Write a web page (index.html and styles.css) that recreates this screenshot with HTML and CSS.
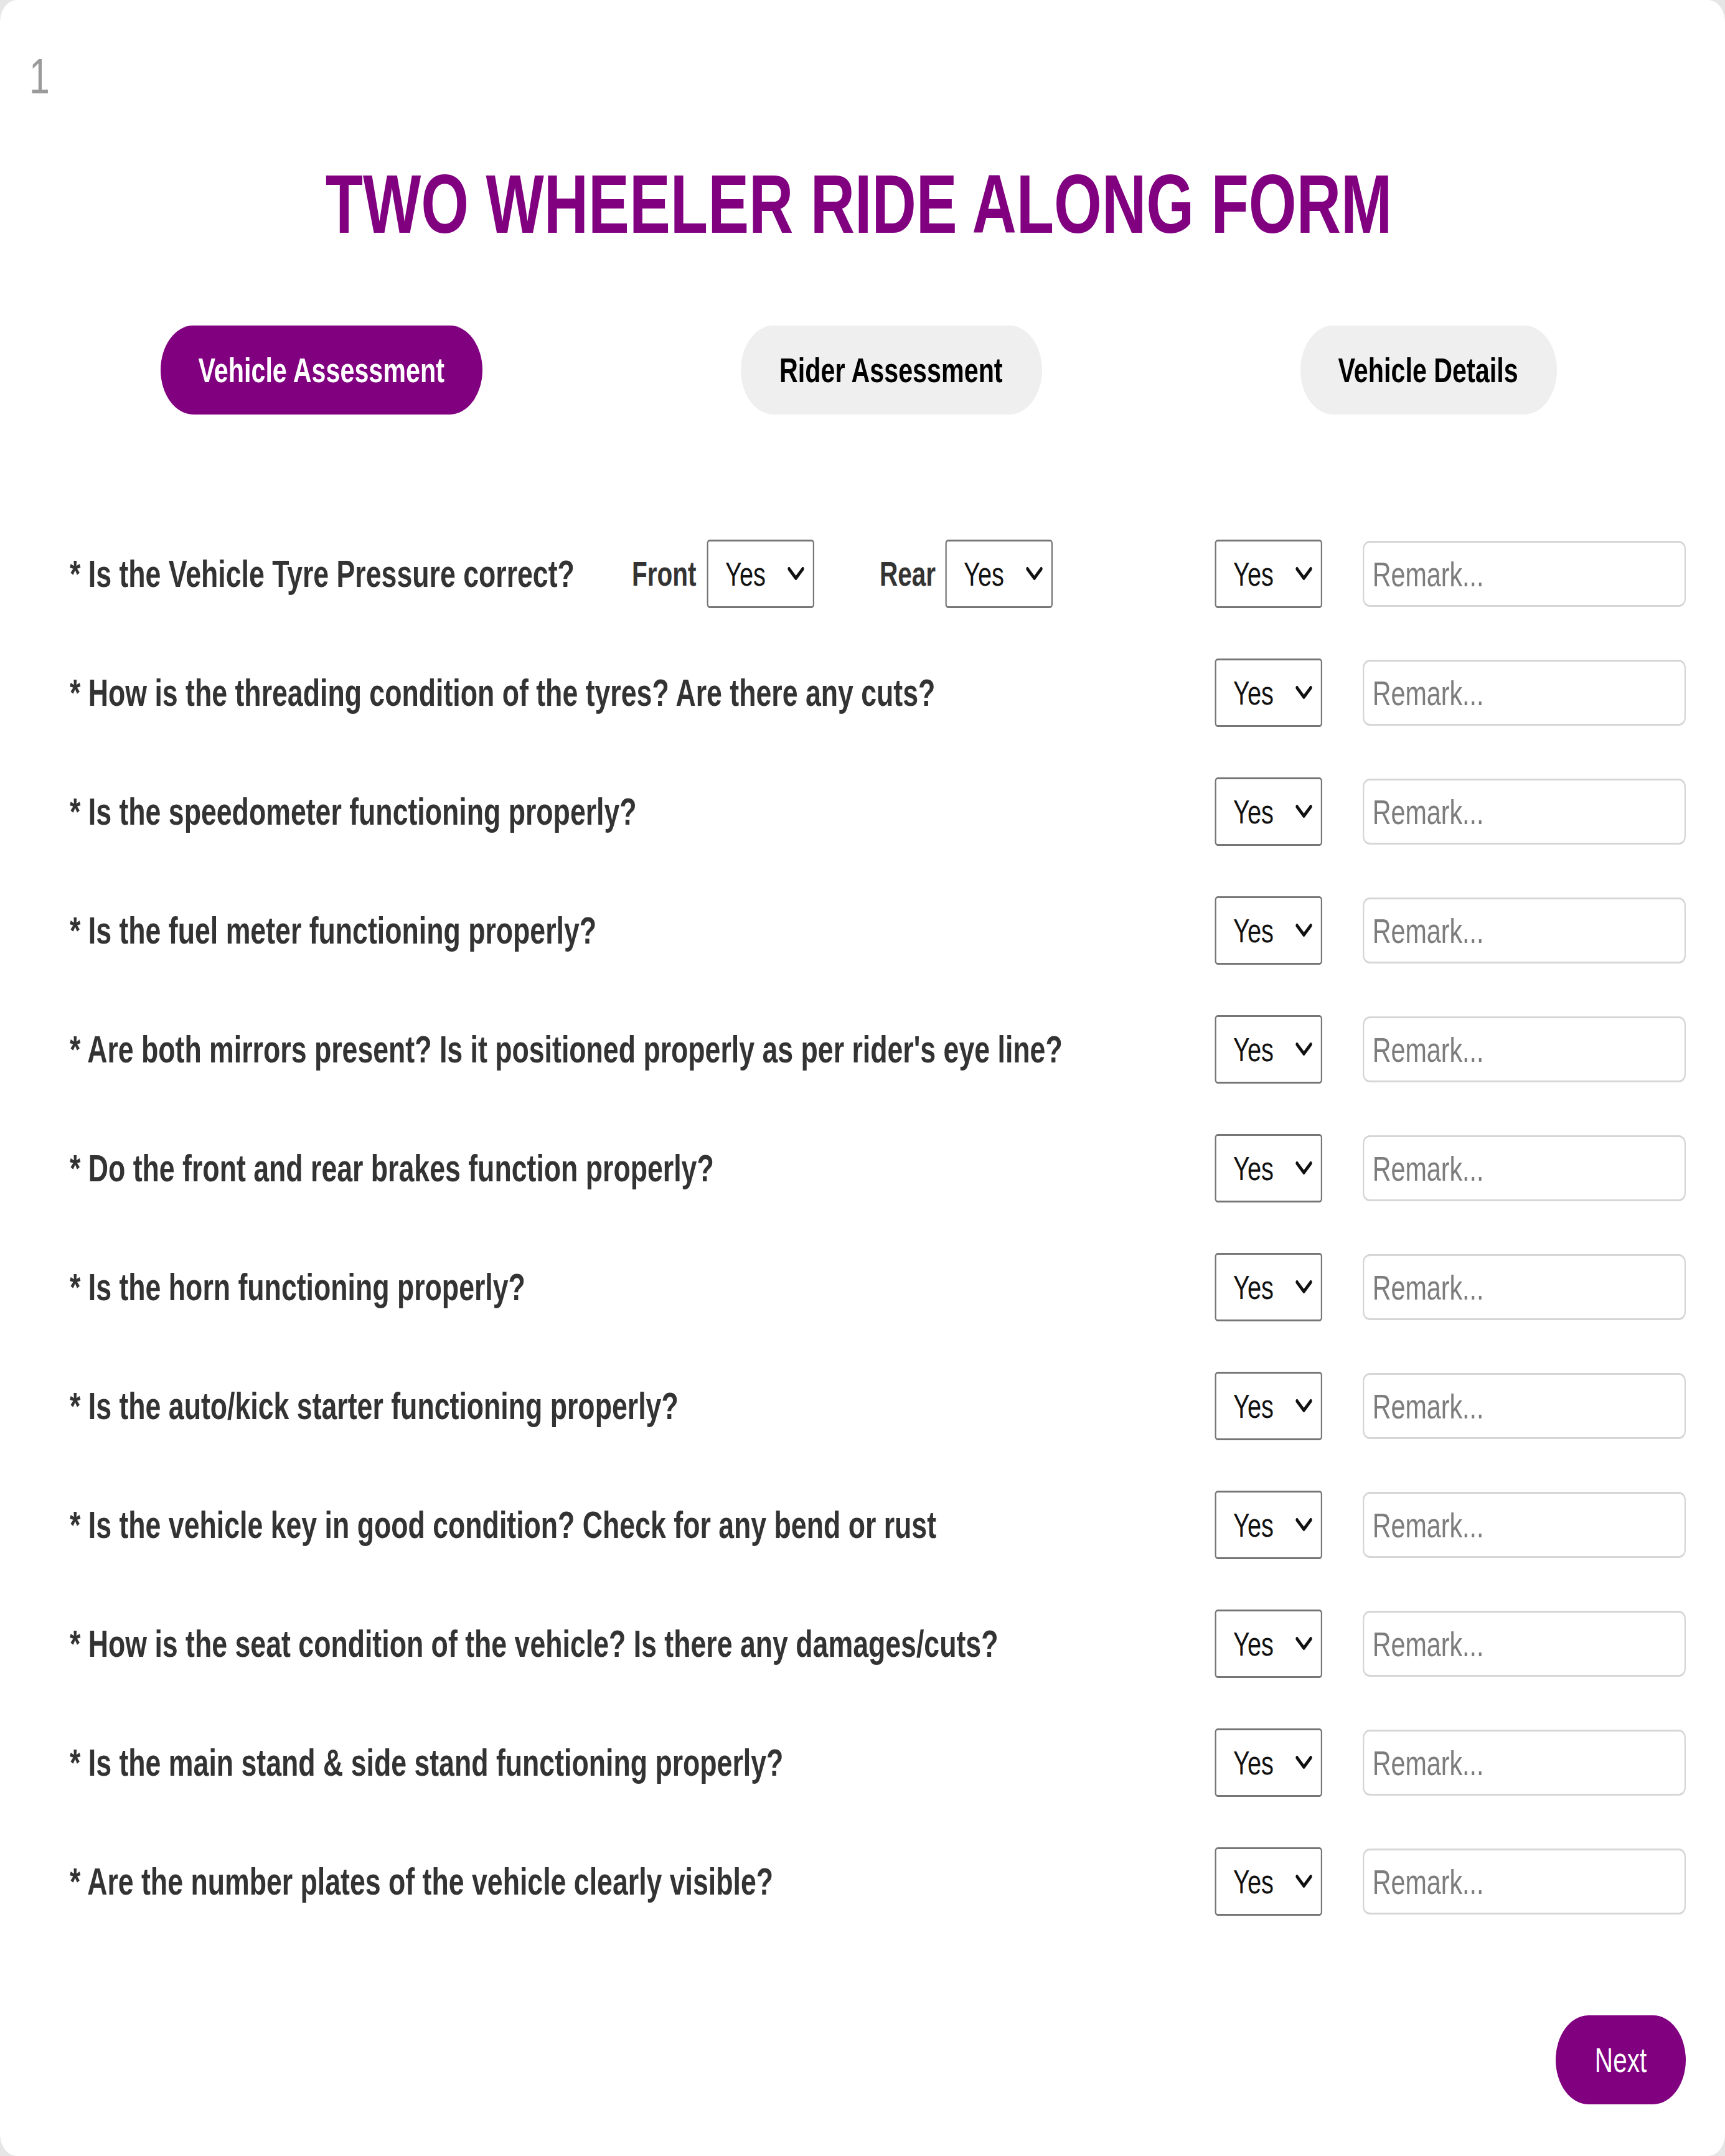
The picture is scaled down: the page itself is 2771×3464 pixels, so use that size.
FILE: index.html
```html
<!DOCTYPE html>
<html lang="en">
<head>
<meta charset="utf-8">
<title>Two Wheeler Ride Along Form</title>
<link rel="stylesheet" href="styles.css">
</head>
<body>
<div class="card">
  <div class="page-num"><span class="sq sq-l">1</span></div>
  <h1 class="title"><span class="sq sq-c">TWO WHEELER RIDE ALONG FORM</span></h1>
  <nav class="tabs">
    <button class="tab tab-1 active" type="button"><span class="sq sq-c">Vehicle Assessment</span></button>
    <button class="tab tab-2" type="button"><span class="sq sq-c">Rider Assessment</span></button>
    <button class="tab tab-3" type="button"><span class="sq sq-c">Vehicle Details</span></button>
  </nav>
  <form class="rows">
    <div class="row">
      <label class="q q-first"><span class="sq sq-l">* Is the Vehicle Tyre Pressure correct?</span></label>
      <div class="pairs">
        <div class="pair">
          <span class="sub-label front"><span class="sq sq-l">Front</span></span>
          <div class="sel ctl"><select><option>Yes</option><option>No</option></select><svg class="chev" viewBox="0 0 36 22"><polyline points="3,3 18,18 33,3"/></svg></div>
        </div>
        <div class="pair">
          <span class="sub-label rear"><span class="sq sq-l">Rear</span></span>
          <div class="sel ctl"><select><option>Yes</option><option>No</option></select><svg class="chev" viewBox="0 0 36 22"><polyline points="3,3 18,18 33,3"/></svg></div>
        </div>
      </div>
      <div class="answer">
        <div class="sel ctl"><select><option>Yes</option><option>No</option></select><svg class="chev" viewBox="0 0 36 22"><polyline points="3,3 18,18 33,3"/></svg></div>
        <input class="remark ctl" type="text" placeholder="Remark...">
      </div>
    </div>
    <div class="row">
      <label class="q"><span class="sq sq-l">* How is the threading condition of the tyres? Are there any cuts?</span></label>
      <div class="answer">
        <div class="sel ctl"><select><option>Yes</option><option>No</option></select><svg class="chev" viewBox="0 0 36 22"><polyline points="3,3 18,18 33,3"/></svg></div>
        <input class="remark ctl" type="text" placeholder="Remark...">
      </div>
    </div>
    <div class="row">
      <label class="q"><span class="sq sq-l">* Is the speedometer functioning properly?</span></label>
      <div class="answer">
        <div class="sel ctl"><select><option>Yes</option><option>No</option></select><svg class="chev" viewBox="0 0 36 22"><polyline points="3,3 18,18 33,3"/></svg></div>
        <input class="remark ctl" type="text" placeholder="Remark...">
      </div>
    </div>
    <div class="row">
      <label class="q"><span class="sq sq-l">* Is the fuel meter functioning properly?</span></label>
      <div class="answer">
        <div class="sel ctl"><select><option>Yes</option><option>No</option></select><svg class="chev" viewBox="0 0 36 22"><polyline points="3,3 18,18 33,3"/></svg></div>
        <input class="remark ctl" type="text" placeholder="Remark...">
      </div>
    </div>
    <div class="row">
      <label class="q"><span class="sq sq-l">* Are both mirrors present? Is it positioned properly as per rider's eye line?</span></label>
      <div class="answer">
        <div class="sel ctl"><select><option>Yes</option><option>No</option></select><svg class="chev" viewBox="0 0 36 22"><polyline points="3,3 18,18 33,3"/></svg></div>
        <input class="remark ctl" type="text" placeholder="Remark...">
      </div>
    </div>
    <div class="row">
      <label class="q"><span class="sq sq-l">* Do the front and rear brakes function properly?</span></label>
      <div class="answer">
        <div class="sel ctl"><select><option>Yes</option><option>No</option></select><svg class="chev" viewBox="0 0 36 22"><polyline points="3,3 18,18 33,3"/></svg></div>
        <input class="remark ctl" type="text" placeholder="Remark...">
      </div>
    </div>
    <div class="row">
      <label class="q"><span class="sq sq-l">* Is the horn functioning properly?</span></label>
      <div class="answer">
        <div class="sel ctl"><select><option>Yes</option><option>No</option></select><svg class="chev" viewBox="0 0 36 22"><polyline points="3,3 18,18 33,3"/></svg></div>
        <input class="remark ctl" type="text" placeholder="Remark...">
      </div>
    </div>
    <div class="row">
      <label class="q"><span class="sq sq-l">* Is the auto/kick starter functioning properly?</span></label>
      <div class="answer">
        <div class="sel ctl"><select><option>Yes</option><option>No</option></select><svg class="chev" viewBox="0 0 36 22"><polyline points="3,3 18,18 33,3"/></svg></div>
        <input class="remark ctl" type="text" placeholder="Remark...">
      </div>
    </div>
    <div class="row">
      <label class="q"><span class="sq sq-l">* Is the vehicle key in good condition? Check for any bend or rust</span></label>
      <div class="answer">
        <div class="sel ctl"><select><option>Yes</option><option>No</option></select><svg class="chev" viewBox="0 0 36 22"><polyline points="3,3 18,18 33,3"/></svg></div>
        <input class="remark ctl" type="text" placeholder="Remark...">
      </div>
    </div>
    <div class="row">
      <label class="q"><span class="sq sq-l">* How is the seat condition of the vehicle? Is there any damages/cuts?</span></label>
      <div class="answer">
        <div class="sel ctl"><select><option>Yes</option><option>No</option></select><svg class="chev" viewBox="0 0 36 22"><polyline points="3,3 18,18 33,3"/></svg></div>
        <input class="remark ctl" type="text" placeholder="Remark...">
      </div>
    </div>
    <div class="row">
      <label class="q"><span class="sq sq-l">* Is the main stand &amp; side stand functioning properly?</span></label>
      <div class="answer">
        <div class="sel ctl"><select><option>Yes</option><option>No</option></select><svg class="chev" viewBox="0 0 36 22"><polyline points="3,3 18,18 33,3"/></svg></div>
        <input class="remark ctl" type="text" placeholder="Remark...">
      </div>
    </div>
    <div class="row">
      <label class="q"><span class="sq sq-l">* Are the number plates of the vehicle clearly visible?</span></label>
      <div class="answer">
        <div class="sel ctl"><select><option>Yes</option><option>No</option></select><svg class="chev" viewBox="0 0 36 22"><polyline points="3,3 18,18 33,3"/></svg></div>
        <input class="remark ctl" type="text" placeholder="Remark...">
      </div>
    </div>
  </form>
  <div class="footer">
    <button class="next" type="button"><span class="sq sq-c">Next</span></button>
  </div>
</div>
</body>
</html>
```
FILE: styles.css
```css
html, body {
  margin: 0;
  padding: 0;
  overflow: hidden;
  background: #e6e6e6;
}

body {
  font-family: "Liberation Sans", Arial, sans-serif;
}

/* the reference is horizontally compressed: text and controls are squeezed */
.sq {
  display: inline-block;
  white-space: nowrap;
  transform: scaleX(0.737);
}
.sq-l { transform-origin: 0 50%; }
.sq-c { transform-origin: 50% 50%; }

.ctl {
  transform: scaleX(0.737);
  transform-origin: 100% 50%;
}

.card {
  box-sizing: border-box;
  height: 3464px;
  background: #fff;
  border-radius: 27px / 36px;
  padding: 83px 63px 0 50px;
}

.page-num {
  font-size: 80px;
  line-height: 1;
  height: 80px;
  color: #9a9a9a;
  margin-left: -3px;
}

.title {
  margin: 98px 0 0;
  font-size: 134px;
  line-height: 1;
  font-weight: 700;
  color: #800080;
  text-align: center;
}

.tabs {
  margin-top: 128px;
  display: flex;
  justify-content: space-around;
}

.tab {
  display: flex;
  align-items: center;
  justify-content: center;
  height: 143px;
  padding: 0;
  border: none;
  border-radius: 53px / 72px;
  background: #efefef;
  color: #000;
  font-family: "Liberation Sans", Arial, sans-serif;
  font-size: 56px;
  font-weight: 700;
}
.tab-1 { width: 517px; }
.tab-2 { width: 484px; }
.tab-3 { width: 412px; }

.tab.active {
  background: #800080;
  color: #fff;
}

.rows {
  margin: 201px 0 0;
  display: flex;
  flex-direction: column;
  gap: 81px;
}

.row {
  display: flex;
  align-items: center;
  height: 110px;
  padding-left: 62px;
}

.q {
  flex: 1 1 0;
  min-width: 0;
  display: flex;
  align-items: center;
  font-size: 60.6px;
  font-weight: 700;
  color: #333;
  white-space: nowrap;
}

.q.q-first {
  flex: 0 0 903px;
}

.pairs {
  display: flex;
  align-items: center;
  gap: 105px;
}

.pair {
  display: flex;
  align-items: center;
  gap: 16px;
}

.sub-label {
  display: flex;
  align-items: center;
  font-size: 55px;
  font-weight: 700;
  color: #333;
  white-space: nowrap;
}
.sub-label.front { width: 104px; }
.sub-label.rear { width: 90px; }

.answer {
  margin-left: auto;
  display: flex;
  align-items: center;
  gap: 65px;
}

.sel {
  position: relative;
  flex: 0 0 auto;
  width: 234px;
  height: 110px;
  margin-left: -61.5px;
}

.sel select {
  appearance: none;
  -webkit-appearance: none;
  box-sizing: border-box;
  width: 100%;
  height: 100%;
  margin: 0;
  padding: 0 0 0 37px;
  border: 3px solid #767676;
  border-radius: 6px;
  background: #fff;
  color: #111;
  font-family: "Liberation Sans", Arial, sans-serif;
  font-size: 54px;
}

.chev {
  position: absolute;
  right: 22px;
  top: 44px;
  width: 36px;
  height: 22px;
  pointer-events: none;
  fill: none;
  stroke: #111;
  stroke-width: 6;
  stroke-linecap: round;
  stroke-linejoin: round;
}

.remark {
  box-sizing: border-box;
  flex: 0 0 auto;
  width: 704px;
  height: 106px;
  margin: 0 0 0 -185px;
  padding: 0 0 0 18px;
  border: 3px solid #d6d6d6;
  border-radius: 15px / 13px;
  background: #fff;
  font-family: "Liberation Sans", Arial, sans-serif;
  font-size: 56px;
  color: #333;
}

.remark::placeholder {
  color: #7d7d7d;
}

.footer {
  margin-top: 160px;
  display: flex;
  justify-content: flex-end;
}

.next {
  display: flex;
  align-items: center;
  justify-content: center;
  width: 209px;
  height: 143px;
  padding: 0;
  border: none;
  border-radius: 53px / 72px;
  background: #800080;
  color: #fff;
  font-family: "Liberation Sans", Arial, sans-serif;
  font-size: 55px;
}
```
